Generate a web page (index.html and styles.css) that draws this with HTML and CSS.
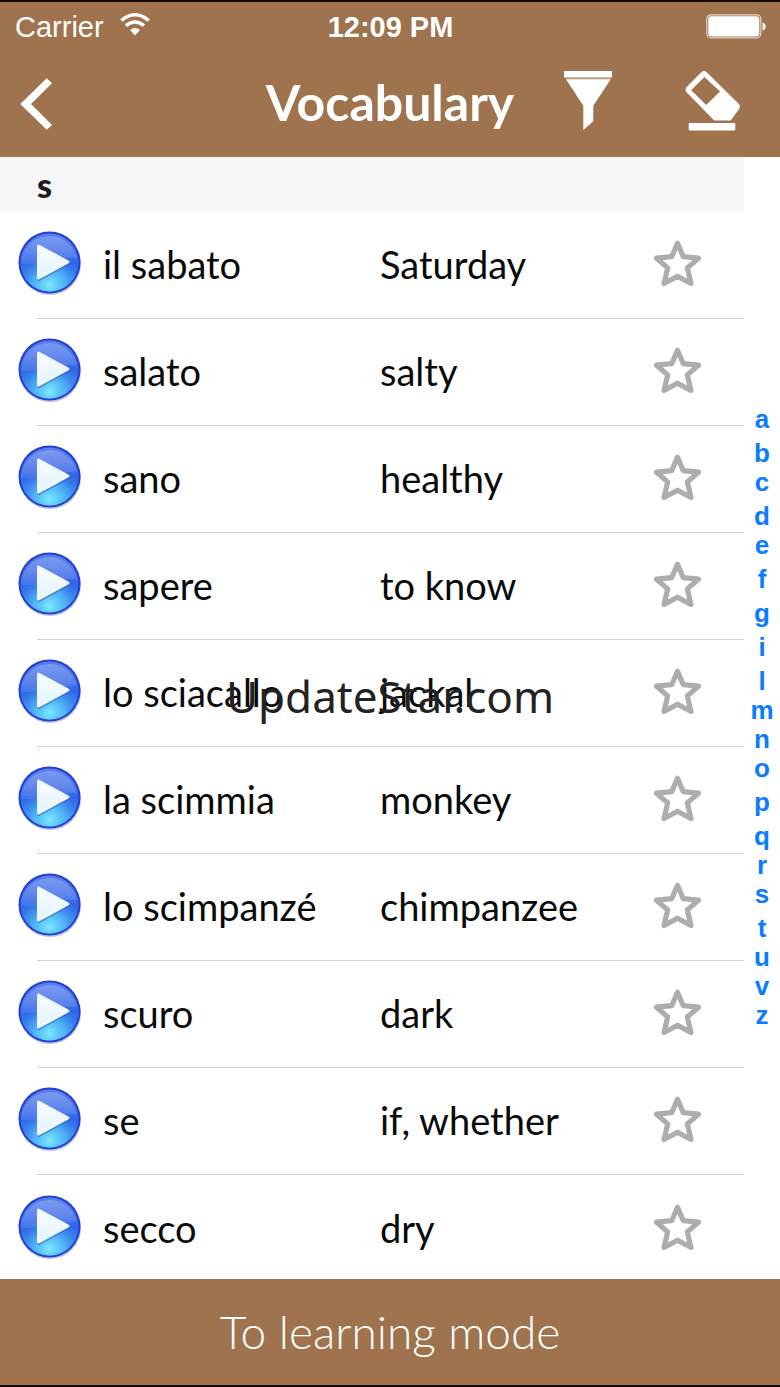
FILE: index.html
```html
<!DOCTYPE html>
<html lang="en">
<head>
<meta charset="utf-8">
<meta name="viewport" content="width=device-width, initial-scale=1">
<title>Vocabulary</title>
<link rel="stylesheet" href="styles.css">
</head>
<body>
<svg class="defs" width="0" height="0" aria-hidden="true">
  <defs>
    <linearGradient id="ball" x1="0" y1="0" x2="0" y2="1">
      <stop offset="0" stop-color="#5a80ea"/>
      <stop offset=".3" stop-color="#4a72e8"/>
      <stop offset=".5" stop-color="#2f66e6"/>
      <stop offset="1" stop-color="#3f9cf2"/>
    </linearGradient>
    <radialGradient id="glow" cx=".5" cy=".88" r=".55">
      <stop offset="0" stop-color="#7beaff"/>
      <stop offset=".5" stop-color="#55bdf8" stop-opacity=".75"/>
      <stop offset="1" stop-color="#3a80f0" stop-opacity="0"/>
    </radialGradient>
    <linearGradient id="gloss" x1="0" y1="0" x2="0" y2="1">
      <stop offset="0" stop-color="#9db6f5" stop-opacity=".5"/>
      <stop offset="1" stop-color="#7fa2f5" stop-opacity=".25"/>
    </linearGradient>
    <linearGradient id="arrow" x1="0" y1="0" x2="0" y2="1">
      <stop offset="0" stop-color="#fbfdff"/>
      <stop offset="1" stop-color="#dff3fd"/>
    </linearGradient>
    <symbol id="play" viewBox="0 0 64 66">
      <circle cx="32" cy="33" r="31" fill="#8d97b8" opacity=".55"/>
      <circle cx="31.500" cy="31.500" r="31" fill="#2440d4"/>
      <circle cx="31.500" cy="31.500" r="29" fill="url(#ball)"/>
      <circle cx="31.500" cy="31.500" r="29" fill="url(#glow)"/>
      <path d="M3 30a28.500 28.500 0 0 1 56-3C45 25 31 34 3 33z" fill="url(#gloss)"/>
      <path d="M21 16.500l29 15.500-29 16z" fill="#2a5cb8" opacity=".5" stroke="#2a5cb8" stroke-width="4" stroke-linejoin="round"/>
      <path d="M20.500 15L50 31l-29.500 16z" fill="url(#arrow)" stroke="#eef8fe" stroke-width="3" stroke-linejoin="round"/>
    </symbol>
    <symbol id="star" viewBox="0 0 50 50">
      <path d="M24.500 4.300l5.800 13.400 15.200 1.500-11.200 9.700 3.700 15.600-13.500-7.300L11 44.500l3.700-15.600L3.500 19.200l15.200-1.500z" fill="none" stroke="#adadad" stroke-width="5.200" stroke-linejoin="round"/>
    </symbol>
  </defs>
</svg>

<div class="app">
  <header class="top">
    <div class="status">
      <div class="carrier">
        <span>Carrier</span>
        <svg width="30" height="26" viewBox="0 0 30 26" aria-hidden="true">
          <g fill="none" stroke="#fff" stroke-width="3.400">
            <path d="M1.300 7.500Q15-4 28.700 7.500"/>
            <path d="M6 12.600q9-7.400 18 0"/>
          </g>
          <path d="M10 17q5-4 10 0l-5 5.500z" fill="#fff"/>
        </svg>
      </div>
      <span class="clock">12:09 PM</span>
      <svg class="battery" width="60" height="25" viewBox="0 0 60 25" aria-hidden="true">
        <rect x=".8" y=".8" width="54" height="23" rx="4" fill="none" stroke="#e3d5c8" stroke-width="1.200"/>
        <rect x="2.300" y="2.200" width="51" height="20.200" rx="3" fill="#fff"/>
        <path d="M56.500 8.500q3.200 1 3.200 4t-3.200 4z" fill="#fff"/>
      </svg>
    </div>
    <div class="nav">
      <button class="icon" type="button" aria-label="Back">
        <svg width="32" height="56" viewBox="0 -4 32 56"><path d="M26.700.3L32 5.300 11 26l21 21-5.300 4.700L.3 26z" fill="#fff"/></svg>
      </button>
      <h1>Vocabulary</h1>
      <div class="actions">
        <button class="icon" type="button" aria-label="Filter">
          <svg width="50" height="64" viewBox="0 0 50 64"><path d="M1 1h48v6.500H1zM3 9.200h44.700L30.300 35.700v15.600L20.300 60V35.700z" fill="#fff"/><path d="M2.500 8.300h45" stroke="#cbb5a2" stroke-width=".8"/></svg>
        </button>
        <button class="icon" type="button" aria-label="Erase">
          <svg width="60" height="64" viewBox="0 0 60 64"><path fill="#fff" fill-rule="evenodd" d="M17.300 2.300q2.700-2.600 5.400 0l32 31.500q2.300 2.700 0 5.600L46.700 50.500H30.300L2.700 22.600q-2.400-2.900 0-5.600zM20.400 7L7.200 20.200 22.200 35 36 21.400z"/><rect x="4.700" y="53" width="46.600" height="7.400" rx="1" fill="#fff"/></svg>
        </button>
      </div>
    </div>
  </header>

  <main class="content">
    <section class="words">
      <h2>s</h2>
      <ul>
        <li><button class="icon" type="button" aria-label="Play il sabato"><svg width="64" height="66"><use href="#play"/></svg></button><span>il sabato</span><span>Saturday</span><button class="icon" type="button" aria-label="Mark il sabato"><svg width="50" height="50"><use href="#star"/></svg></button></li>
        <li><button class="icon" type="button" aria-label="Play salato"><svg width="64" height="66"><use href="#play"/></svg></button><span>salato</span><span>salty</span><button class="icon" type="button" aria-label="Mark salato"><svg width="50" height="50"><use href="#star"/></svg></button></li>
        <li><button class="icon" type="button" aria-label="Play sano"><svg width="64" height="66"><use href="#play"/></svg></button><span>sano</span><span>healthy</span><button class="icon" type="button" aria-label="Mark sano"><svg width="50" height="50"><use href="#star"/></svg></button></li>
        <li><button class="icon" type="button" aria-label="Play sapere"><svg width="64" height="66"><use href="#play"/></svg></button><span>sapere</span><span>to know</span><button class="icon" type="button" aria-label="Mark sapere"><svg width="50" height="50"><use href="#star"/></svg></button></li>
        <li><button class="icon" type="button" aria-label="Play lo sciacallo"><svg width="64" height="66"><use href="#play"/></svg></button><span>lo sciacallo</span><span>jackal</span><button class="icon" type="button" aria-label="Mark lo sciacallo"><svg width="50" height="50"><use href="#star"/></svg></button></li>
        <li><button class="icon" type="button" aria-label="Play la scimmia"><svg width="64" height="66"><use href="#play"/></svg></button><span>la scimmia</span><span>monkey</span><button class="icon" type="button" aria-label="Mark la scimmia"><svg width="50" height="50"><use href="#star"/></svg></button></li>
        <li><button class="icon" type="button" aria-label="Play lo scimpanzé"><svg width="64" height="66"><use href="#play"/></svg></button><span>lo scimpanzé</span><span>chimpanzee</span><button class="icon" type="button" aria-label="Mark lo scimpanzé"><svg width="50" height="50"><use href="#star"/></svg></button></li>
        <li><button class="icon" type="button" aria-label="Play scuro"><svg width="64" height="66"><use href="#play"/></svg></button><span>scuro</span><span>dark</span><button class="icon" type="button" aria-label="Mark scuro"><svg width="50" height="50"><use href="#star"/></svg></button></li>
        <li><button class="icon" type="button" aria-label="Play se"><svg width="64" height="66"><use href="#play"/></svg></button><span>se</span><span>if, whether</span><button class="icon" type="button" aria-label="Mark se"><svg width="50" height="50"><use href="#star"/></svg></button></li>
        <li><button class="icon" type="button" aria-label="Play secco"><svg width="64" height="66"><use href="#play"/></svg></button><span>secco</span><span>dry</span><button class="icon" type="button" aria-label="Mark secco"><svg width="50" height="50"><use href="#star"/></svg></button></li>
      </ul>
    </section>
    <nav class="index" aria-label="Letters">
      <a href="#a">a</a>
      <a class="tall" href="#b">b</a>
      <a href="#c">c</a>
      <a class="tall" href="#d">d</a>
      <a href="#e">e</a>
      <a class="tall" href="#f">f</a>
      <a class="tall" href="#g">g</a>
      <a class="tall" href="#i">i</a>
      <a class="tall" href="#l">l</a>
      <a href="#m">m</a>
      <a href="#n">n</a>
      <a href="#o">o</a>
      <a class="tall" href="#p">p</a>
      <a class="tall" href="#q">q</a>
      <a href="#r">r</a>
      <a href="#s">s</a>
      <a class="tall" href="#t">t</a>
      <a href="#u">u</a>
      <a href="#v">v</a>
      <a href="#z">z</a>
    </nav>
  </main>

  <button class="mode" type="button">To learning mode</button>
  <div class="watermark">UpdateStar.com</div>
</div>
</body>
</html>
```
FILE: styles.css
```css
* {
  box-sizing: border-box;
}

body {
  margin: 0;
  background: #fff;
  color: #0a0a0a;
  font-family: Lato, "Open Sans", sans-serif;
}

.defs {
  position: absolute;
}

.app {
  position: relative;
  display: flex;
  flex-direction: column;
  min-height: 100vh;
}

button {
  border: 0;
  padding: 0;
  background: none;
  color: inherit;
  font-family: inherit;
  cursor: pointer;
}

.icon {
  display: block;
}

.icon svg {
  display: block;
}

.top {
  height: 157px;
  border-top: 2px solid #120b05;
  background: #9f734d;
  color: #fff;
}

.status {
  display: grid;
  grid-template-columns: 1fr auto 1fr;
  align-items: center;
  height: 48px;
  padding: 0 14px 0 15px;
  font-family: "Liberation Sans", Arial, sans-serif;
  font-size: 29px;
  line-height: 32px;
}

.carrier {
  display: flex;
  align-items: center;
  gap: 16px;
}

.carrier span,
.clock {
  padding-top: 2px;
}

.clock {
  font-weight: bold;
}

.battery {
  justify-self: end;
}

.nav {
  display: grid;
  grid-template-columns: 1fr auto 1fr;
  align-items: center;
  height: 104px;
  padding: 0 36px;
}

.nav > .icon {
  margin-left: -16px;
}

h1 {
  margin: 0;
  font-size: 50px;
  line-height: 60px;
  font-weight: bold;
}

.actions {
  display: flex;
  justify-content: flex-end;
  gap: 71px;
}

.content {
  flex: 1;
  display: flex;
}

.words {
  flex: 1;
}

h2 {
  margin: 0;
  padding-left: 37px;
  background: #f6f6f6;
  color: #1c1c1c;
  font-size: 34px;
  line-height: 55px;
  font-weight: 900;
}

ul {
  margin: 0;
  padding: 0;
  list-style: none;
}

li {
  display: grid;
  grid-template-columns: 64px 256fr 252fr 50px;
  column-gap: 21px;
  align-items: center;
  height: 107px;
  padding: 0 41px 4px 18px;
  background: linear-gradient(#d2d2d2, #d2d2d2) right bottom / calc(100% - 37px) 1px no-repeat;
  font-size: 38px;
  line-height: 48px;
  white-space: nowrap;
}

li:last-child {
  height: 104px;
  padding-top: 2px;
  padding-bottom: 0;
  background: none;
}

.index {
  display: flex;
  flex-direction: column;
  justify-content: center;
  width: 36px;
  padding-bottom: 2px;
  font-family: "Liberation Sans", Arial, sans-serif;
  font-size: 26px;
  line-height: 29px;
  font-weight: bold;
  text-align: center;
}

.index a {
  color: #0a7cff;
  text-decoration: none;
}

.index .tall {
  padding-top: 5px;
}

.mode {
  height: 108px;
  border-bottom: 2px solid #120b05;
  background: #9f734d;
  color: #fff;
  font-size: 46px;
  line-height: 52px;
  font-weight: 300;
}

.watermark {
  position: absolute;
  top: 50%;
  left: 50%;
  transform: translate(-50%, -50%);
  padding-top: 4px;
  color: #222;
  font-family: "Noto Sans", "Open Sans", sans-serif;
  font-size: 44px;
  line-height: 60px;
  pointer-events: none;
}
```
